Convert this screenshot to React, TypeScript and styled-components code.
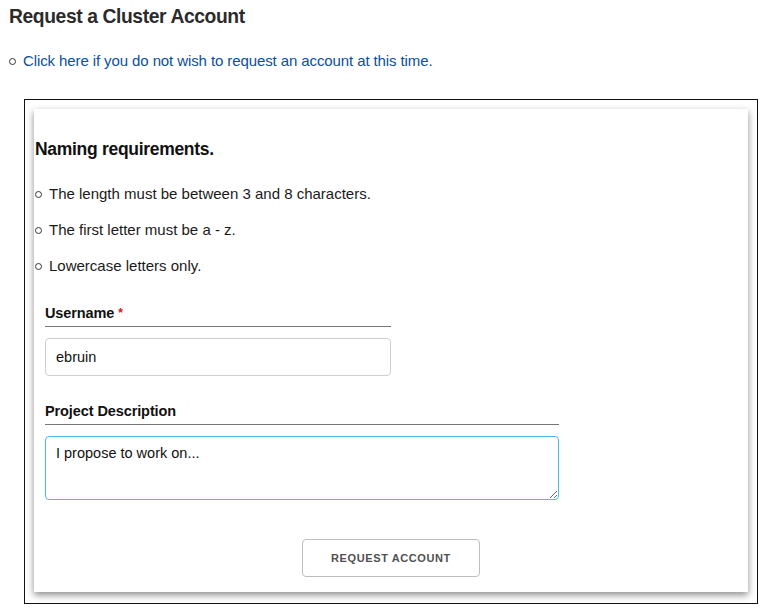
import React, { useEffect, useRef } from 'react';
import styled, { createGlobalStyle } from 'styled-components';

const GlobalStyle = createGlobalStyle`
  html, body {
    margin: 0;
    padding: 0;
    background: #ffffff;
  }
  body {
    font-family: "Liberation Sans", Arial, sans-serif;
    color: #1a1a1a;
  }
  * { box-sizing: border-box; }
`;

const Page = styled.div`
  width: 768px;
  height: 616px;
  padding: 5px 11px 0 9px;
  overflow: hidden;
`;

const Title = styled.h1`
  margin: 0;
  font-size: 19.3px;
  font-weight: 700;
  letter-spacing: -0.4px;
  line-height: 24px;
  color: #2b2b2b;
`;

const Bullets = styled.ul<{ $gap: number }>`
  list-style: none;
  margin: 0;
  padding: 0;
  display: flex;
  flex-direction: column;
  gap: ${p => p.$gap}px;
`;

const Bullet = styled.li`
  display: flex;
  align-items: center;
  gap: 7px;
  font-size: 15px;
  line-height: 20px;
  &::before {
    content: '';
    width: 5px;
    height: 5px;
    border: 1px solid #333;
    border-radius: 50%;
    flex: none;
  }
`;

const TopList = styled(Bullets)`
  margin: 22px 0 0 0;
`;

const CancelLink = styled.a`
  color: #0b4f9c;
  text-decoration: none;
  font-size: 15px;
  letter-spacing: -0.1px;
`;

const Frame = styled.div`
  margin: 28px 0 0 15px;
  border: 1px solid #111;
  width: 734px;
  height: 505px;
  padding: 9px 9px 0 9px;
`;

const Card = styled.section`
  background: #fff;
  height: 483px;
  box-shadow: 0 3px 7px rgba(0, 0, 0, 0.45);
  padding: 28px 0 0 1px;
`;

const CardTitle = styled.h2`
  margin: 0;
  font-size: 17.5px;
  font-weight: 700;
  letter-spacing: -0.3px;
  line-height: 24px;
  color: #111;
`;

const Rules = styled(Bullets)`
  margin-top: 23px;
  padding-left: 0;
`;

const Form = styled.form`
  margin: 28px 0 0 10px;
  display: flex;
  flex-direction: column;
`;

const Field = styled.div<{ $width: number }>`
  width: ${p => p.$width}px;
  display: flex;
  flex-direction: column;
  margin-bottom: 26px;
  &:last-of-type { margin-bottom: 24px; }
`;

const Label = styled.label`
  font-size: 14.5px;
  font-weight: 700;
  color: #111;
  letter-spacing: -0.1px;
  line-height: 18px;
  padding-bottom: 4px;
  border-bottom: 1px solid #777;
  margin-bottom: 11px;
`;

const Required = styled.span`
  color: #e0101a;
  margin-left: 4px;
  font-size: 12px;
  vertical-align: top;
`;

const TextInput = styled.input`
  height: 38px;
  border: 1px solid #cfcfcf;
  border-radius: 4px;
  padding: 0 10px;
  font: inherit;
  font-size: 14.5px;
  color: #111;
  outline: none;
`;

const TextArea = styled.textarea`
  height: 64px;
  border: 1px solid #4fb9e6;
  border-radius: 4px;
  padding: 8px 10px;
  font: inherit;
  font-size: 14.5px;
  color: #111;
  caret-color: #111;
  outline: none;
  resize: vertical;
`;

const Actions = styled.div`
  display: flex;
  justify-content: center;
  margin: 13px 0 0 -11px;
`;

const Button = styled.button`
  width: 178px;
  height: 38px;
  background: #fff;
  border: 1px solid #bdbdbd;
  border-radius: 4px;
  font-family: inherit;
  font-size: 11px;
  font-weight: 700;
  letter-spacing: 0.6px;
  color: #505050;
  cursor: pointer;
`;

export default function App() {
  const descRef = useRef<HTMLTextAreaElement>(null);

  useEffect(() => {
    const el = descRef.current;
    if (!el) return;
    el.focus();
    el.setSelectionRange(el.value.length, el.value.length);
  }, []);

  return (
    <>
      <GlobalStyle />
      <Page>
        <Title>Request a Cluster Account</Title>
        <TopList $gap={0}>
          <Bullet>
            <CancelLink href="#">Click here if you do not wish to request an account at this time.</CancelLink>
          </Bullet>
        </TopList>
        <Frame>
          <Card>
            <CardTitle>Naming requirements.</CardTitle>
            <Rules $gap={16}>
              <Bullet>The length must be between 3 and 8 characters.</Bullet>
              <Bullet>The first letter must be a - z.</Bullet>
              <Bullet>Lowercase letters only.</Bullet>
            </Rules>
            <Form onSubmit={e => e.preventDefault()}>
              <Field $width={346}>
                <Label htmlFor="username">
                  Username<Required>*</Required>
                </Label>
                <TextInput id="username" defaultValue="ebruin" />
              </Field>
              <Field $width={514}>
                <Label htmlFor="description">Project Description</Label>
                <TextArea id="description" ref={descRef} defaultValue="I propose to work on..." />
              </Field>
              <Actions>
                <Button type="submit">REQUEST ACCOUNT</Button>
              </Actions>
            </Form>
          </Card>
        </Frame>
      </Page>
    </>
  );
}
